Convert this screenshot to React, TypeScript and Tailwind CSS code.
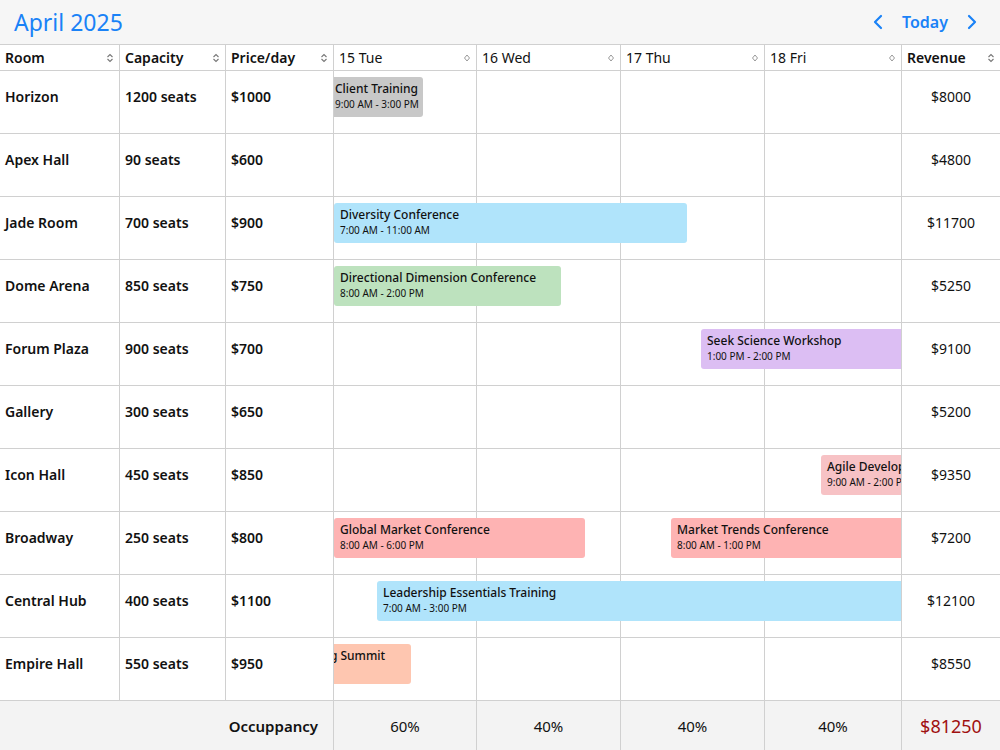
import { ChevronLeft, ChevronRight } from "lucide-react";

type Ev = { t: string; time: string; l: number; w: number; c: string };

const rows: { room: string; cap: string; price: string; rev: string; ev: Ev[] }[] = [
  { room: "Horizon", cap: "1200 seats", price: "$1000", rev: "$8000", ev: [{ t: "Client Training", time: "9:00 AM - 3:00 PM", l: -5, w: 94, c: "bg-[#c8c8c8]" }] },
  { room: "Apex Hall", cap: "90 seats", price: "$600", rev: "$4800", ev: [] },
  { room: "Jade Room", cap: "700 seats", price: "$900", rev: "$11700", ev: [{ t: "Diversity Conference", time: "7:00 AM - 11:00 AM", l: 0, w: 353, c: "bg-[#b0e4fb]" }] },
  { room: "Dome Arena", cap: "850 seats", price: "$750", rev: "$5250", ev: [{ t: "Directional Dimension Conference", time: "8:00 AM - 2:00 PM", l: 0, w: 227, c: "bg-[#bde2be]" }] },
  { room: "Forum Plaza", cap: "900 seats", price: "$700", rev: "$9100", ev: [{ t: "Seek Science Workshop", time: "1:00 PM - 2:00 PM", l: 367, w: 260, c: "bg-[#dcbef3]" }] },
  { room: "Gallery", cap: "300 seats", price: "$650", rev: "$5200", ev: [] },
  { room: "Icon Hall", cap: "450 seats", price: "$850", rev: "$9350", ev: [{ t: "Agile Development Meetup", time: "9:00 AM - 2:00 PM", l: 487, w: 200, c: "bg-[#f7c2c5]" }] },
  { room: "Broadway", cap: "250 seats", price: "$800", rev: "$7200", ev: [
    { t: "Global Market Conference", time: "8:00 AM - 6:00 PM", l: 0, w: 251, c: "bg-[#feb3b3]" },
    { t: "Market Trends Conference", time: "8:00 AM - 1:00 PM", l: 337, w: 300, c: "bg-[#feb3b3]" },
  ] },
  { room: "Central Hub", cap: "400 seats", price: "$1100", rev: "$12100", ev: [{ t: "Leadership Essentials Training", time: "7:00 AM - 3:00 PM", l: 43, w: 600, c: "bg-[#b0e4fb]" }] },
  { room: "Empire Hall", cap: "550 seats", price: "$950", rev: "$8550", ev: [{ t: "Marketing Summit", time: "", l: -62, w: 139, c: "bg-[#fec6b0]" }] },
];

const days = [
  { d: "15 Tue", w: "w-[143px]" },
  { d: "16 Wed", w: "w-[144px]" },
  { d: "17 Thu", w: "w-[144px]" },
  { d: "18 Fri", w: "w-[137px]" },
];

function Sort({ light }: { light?: boolean }) {
  return (
    <svg width="8" height="10" viewBox="0 0 8 10" className={light ? "text-[#999]" : "text-[#777]"}>
      {light ? (
        <path d="M4 2 L6.5 5 L4 8 L1.5 5 Z" fill="none" stroke="currentColor" strokeWidth="1" />
      ) : (
        <path d="M1.5 4 L4 1.5 L6.5 4 M1.5 6 L4 8.5 L6.5 6" fill="none" stroke="currentColor" strokeWidth="1.1" />
      )}
    </svg>
  );
}

export default function App() {
  return (
    <div className="w-[1000px] h-[750px] overflow-hidden bg-white text-[#111] font-['Open_Sans','Noto_Sans',sans-serif]">
      <div className="h-[45px] bg-[#f6f6f6] border-b border-[#d0d0d0] flex items-center justify-between pl-[14px] pr-[16px]">
        <span className="text-[23px] text-[#1a82f7]">April 2025</span>
        <div className="flex items-center gap-3 text-[#1a82f7]">
          <ChevronLeft className="w-6 h-6" strokeWidth={2.2} />
          <span className="text-[16px] font-semibold">Today</span>
          <ChevronRight className="w-6 h-6" strokeWidth={2.2} />
        </div>
      </div>

      <div className="flex h-[26px] border-b border-[#d0d0d0] text-[14px]">
        {[["Room", "w-[120px]"], ["Capacity", "w-[106px]"], ["Price/day", "w-[108px]"]].map(([h, w]) => (
          <div key={h} className={`${w} border-r border-[#d0d0d0] flex items-center justify-between px-[5px] font-semibold`}>
            {h}<Sort />
          </div>
        ))}
        {days.map((d) => (
          <div key={d.d} className={`${d.w} shrink-0 border-r border-[#d0d0d0] flex items-center justify-between px-[5px]`}>
            {d.d}<Sort light />
          </div>
        ))}
        <div className="w-[98px] flex items-center justify-between px-[5px] font-semibold">
          Revenue<Sort />
        </div>
      </div>

      {rows.map((r) => (
        <div key={r.room} className="flex h-[63px] border-b border-[#d0d0d0] text-[14px] font-semibold">
          <div className="w-[120px] border-r border-[#d0d0d0] px-[5px] pt-[15px]">{r.room}</div>
          <div className="w-[106px] border-r border-[#d0d0d0] px-[5px] pt-[15px]">{r.cap}</div>
          <div className="w-[108px] border-r border-[#d0d0d0] px-[5px] pt-[15px]">{r.price}</div>
          <div className="relative w-[568px] shrink-0 overflow-hidden flex border-r border-[#d0d0d0]">
            {days.map((d) => (
              <div key={d.d} className={`${d.w} shrink-0 border-r border-[#d0d0d0] last:border-r-0`} />
            ))}
            {r.ev.map((e) => (
              <div
                key={e.t}
                className={`absolute top-[6px] h-[40px] rounded-[3px] px-[6px] pt-[4px] font-normal leading-tight whitespace-nowrap overflow-hidden ${e.c}`}
                style={{ left: e.l, width: e.w }}
              >
                <div className="text-[12px] font-medium">{e.t}</div>
                <div className="text-[10px] mt-[2px]">{e.time}</div>
              </div>
            ))}
          </div>
          <div className="w-[98px] flex justify-center pt-[15px] font-normal">{r.rev}</div>
        </div>
      ))}

      <div className="flex h-[50px] bg-[#f3f3f3] text-[15px]">
        <div className="w-[334px] border-r border-[#d0d0d0] flex items-center justify-end pr-[15px] font-semibold">Occuppancy</div>
        {[["60%", "w-[143px]"], ["40%", "w-[144px]"], ["40%", "w-[144px]"], ["40%", "w-[137px]"]].map(([p, w], i) => (
          <div key={i} className={`${w} shrink-0 border-r border-[#d0d0d0] flex items-center justify-center`}>{p}</div>
        ))}
        <div className="w-[98px] flex items-center justify-center text-[18px] text-[#a01010]">$81250</div>
      </div>
    </div>
  );
}
